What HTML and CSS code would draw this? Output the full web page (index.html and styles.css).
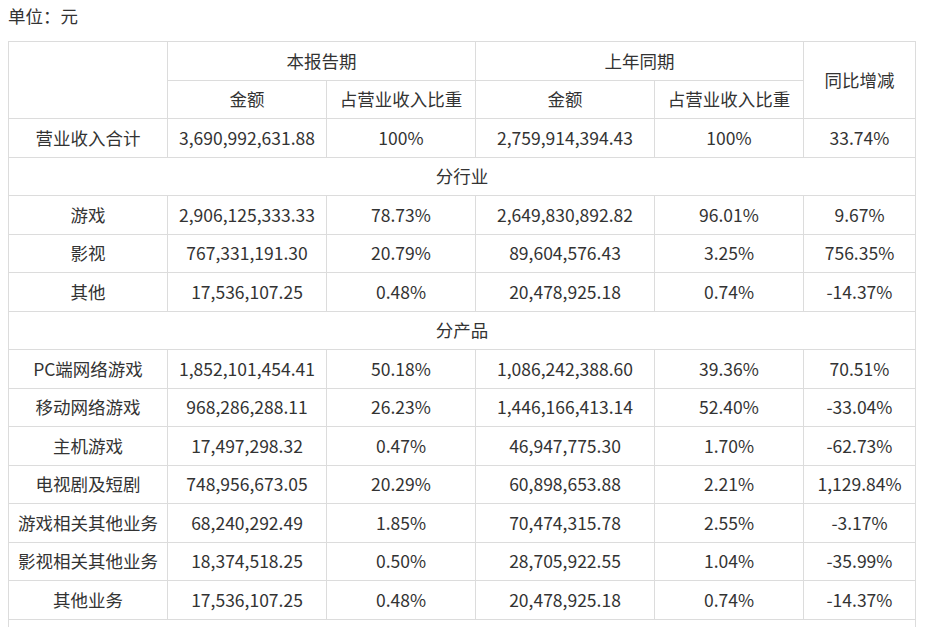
FILE: index.html
```html
<!DOCTYPE html>
<html lang="zh-CN">
<head>
<meta charset="utf-8">
<title>营业收入构成</title>
<link rel="stylesheet" href="styles.css">
</head>
<body>
<div class="unit">单位：元</div>
<table class="report">
  <colgroup>
    <col class="c1"><col class="c2"><col class="c3"><col class="c4"><col class="c5"><col class="c6">
  </colgroup>
  <tbody>
    <tr><td rowspan="2"></td><td colspan="2">本报告期</td><td colspan="2">上年同期</td><td rowspan="2">同比增减</td></tr>
    <tr><td>金额</td><td>占营业收入比重</td><td>金额</td><td>占营业收入比重</td></tr>
    <tr><td>营业收入合计</td><td>3,690,992,631.88</td><td>100%</td><td>2,759,914,394.43</td><td>100%</td><td>33.74%</td></tr>
    <tr><td colspan="6">分行业</td></tr>
    <tr><td>游戏</td><td>2,906,125,333.33</td><td>78.73%</td><td>2,649,830,892.82</td><td>96.01%</td><td>9.67%</td></tr>
    <tr><td>影视</td><td>767,331,191.30</td><td>20.79%</td><td>89,604,576.43</td><td>3.25%</td><td>756.35%</td></tr>
    <tr><td>其他</td><td>17,536,107.25</td><td>0.48%</td><td>20,478,925.18</td><td>0.74%</td><td>-14.37%</td></tr>
    <tr><td colspan="6">分产品</td></tr>
    <tr><td>PC端网络游戏</td><td>1,852,101,454.41</td><td>50.18%</td><td>1,086,242,388.60</td><td>39.36%</td><td>70.51%</td></tr>
    <tr><td>移动网络游戏</td><td>968,286,288.11</td><td>26.23%</td><td>1,446,166,413.14</td><td>52.40%</td><td>-33.04%</td></tr>
    <tr><td>主机游戏</td><td>17,497,298.32</td><td>0.47%</td><td>46,947,775.30</td><td>1.70%</td><td>-62.73%</td></tr>
    <tr><td>电视剧及短剧</td><td>748,956,673.05</td><td>20.29%</td><td>60,898,653.88</td><td>2.21%</td><td>1,129.84%</td></tr>
    <tr><td>游戏相关其他业务</td><td>68,240,292.49</td><td>1.85%</td><td>70,474,315.78</td><td>2.55%</td><td>-3.17%</td></tr>
    <tr><td>影视相关其他业务</td><td>18,374,518.25</td><td>0.50%</td><td>28,705,922.55</td><td>1.04%</td><td>-35.99%</td></tr>
    <tr><td>其他业务</td><td>17,536,107.25</td><td>0.48%</td><td>20,478,925.18</td><td>0.74%</td><td>-14.37%</td></tr>
    <tr><td colspan="6"></td></tr>
  </tbody>
</table>
</body>
</html>
```
FILE: styles.css
```css
html, body {
  margin: 0;
  padding: 0;
  background: #fff;
}
body {
  padding: 8px;
  font-family: "Noto Sans CJK SC", "Noto Sans", sans-serif;
  font-size: 17.5px;
  color: #333;
}
.unit {
  line-height: 18px;
  height: 18px;
  margin-bottom: 16px;
  margin-top: -1px;
}
.report {
  border-collapse: collapse;
  table-layout: fixed;
  width: 907px;
  margin-top: 1px;
}
.c1 { width: 159px; }
.c2 { width: 159px; }
.c3 { width: 149px; }
.c4 { width: 179px; }
.c5 { width: 149px; }
.c6 { width: 112px; }
.report td {
  border: 1px solid #dcdcdc;
  text-align: center;
  vertical-align: middle;
  height: 37.5px;
  padding: 0 3px;
  line-height: 22px;
  white-space: nowrap;
  box-sizing: border-box;
}
.report tr {
  height: 38.5px;
}
```
